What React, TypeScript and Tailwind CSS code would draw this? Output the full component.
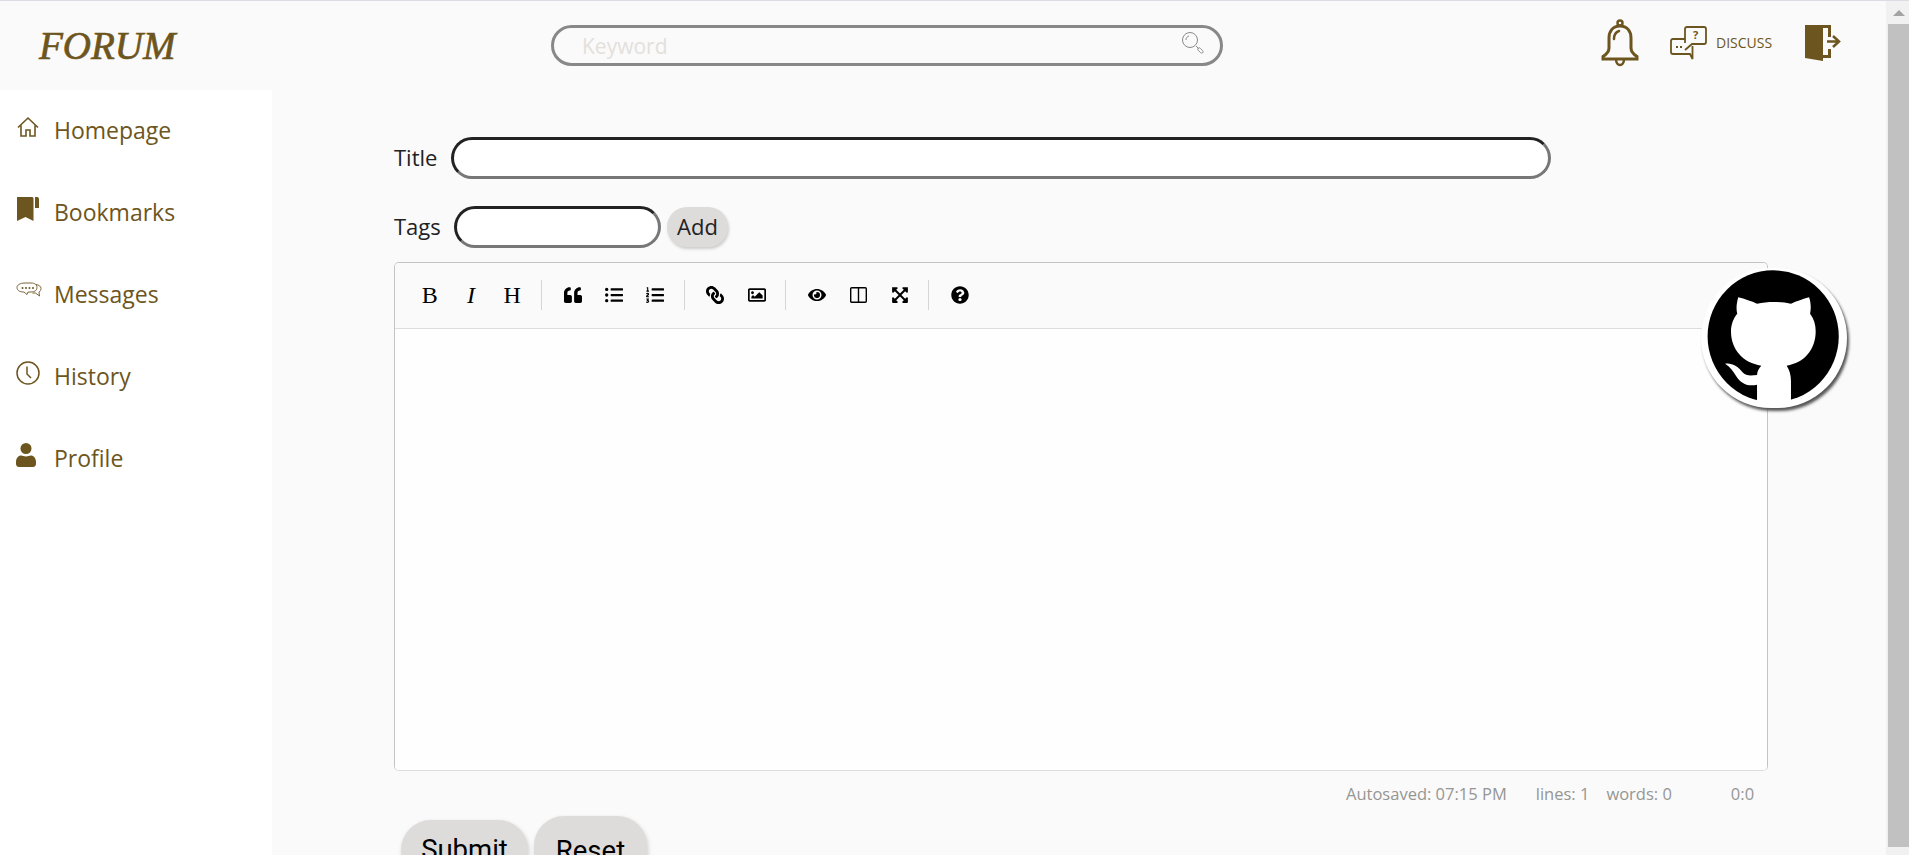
import React from 'react';
import {
  FaQuoteLeft,
  FaListUl,
  FaListOl,
  FaLink,
  FaRegImage,
  FaEye,
  FaExpandArrowsAlt,
  FaQuestionCircle,
} from 'react-icons/fa';

const BROWN = '#6d5520';

function HomeIcon() {
  return (
    <svg width="24" height="24" viewBox="0 0 24 24" fill="none" stroke={BROWN} strokeWidth="1.6">
      <path d="M2 12.500 12 3l10 9.500M5 10.500V21h5v-6h4v6h5V10.500" />
    </svg>
  );
}

function BookmarkIcon() {
  return (
    <svg width="24" height="26" viewBox="0 0 24 26" fill={BROWN}>
      <path d="M1 1h15c1.500 0 1.500 1 1.500 2v22l-8-4-8.500 4V2c0-.5 0-1 0-1Z" />
      <path d="M19 1h2c1.500 0 2 1 2 2v9h-4V1Z" />
    </svg>
  );
}

function MessagesIcon() {
  return (
    <svg width="26" height="18" viewBox="0 0 26 18" fill="none" stroke={BROWN} strokeWidth="0.9">
      <path d="M9 1h6c4 0 6 2 6 4.500S19 10 15 10h-3l-1 2.500-3-2.500C3 10 1 8 1 5.500S4 1 9 1Z" />
      <path d="M20 2.500c3 .5 5 2 5 4 0 1.500-.8 2.800-2 3.500l.5 4-4-3h-3" />
      <g fill={BROWN} stroke="none">
        <circle cx="6.500" cy="6" r="1" />
        <circle cx="10" cy="6" r="1" />
        <circle cx="13.500" cy="6" r="1" />
        <circle cx="17" cy="6" r="1" />
      </g>
    </svg>
  );
}

function ClockIcon() {
  return (
    <svg width="24" height="24" viewBox="0 0 24 24" fill="none" stroke={BROWN} strokeWidth="1.500">
      <circle cx="12" cy="12" r="11" />
      <path d="M11 5.500V13l4 4" />
    </svg>
  );
}

function PersonIcon() {
  return (
    <svg width="20" height="24" viewBox="0 0 20 24" fill={BROWN}>
      <circle cx="10" cy="5.500" r="5.500" />
      <path d="M0 19c0-4 2.500-6.500 5-6.500 1.500 0 3 1 5 1s3.500-1 5-1c2.500 0 5 2.500 5 6.500v2c0 1.500-1 3-3 3H3c-2 0-3-1.500-3-3v-2Z" />
    </svg>
  );
}

function BellIcon() {
  return (
    <svg width="38" height="48" viewBox="0 0 38 48" fill="none" stroke={BROWN} strokeWidth="3">
      <circle cx="19" cy="4" r="2.500" strokeWidth="2.500" />
      <path d="M19 7c-7 0-11 5-11 12v10c0 4-2 6-6 8.500V40h34v-2.500c-4-2.500-6-4.500-6-8.500V19c0-7-4-12-11-12Z" />
      <path d="M13 20c0-4 2-7 5-8" strokeLinecap="round" strokeWidth="2.500" />
      <path d="M15 40c0 4 2 6 4 6s4-2 4-6" strokeWidth="2.500" />
    </svg>
  );
}

function DiscussIcon() {
  return (
    <svg width="37" height="34" viewBox="0 0 37 34" fill="none" stroke={BROWN} strokeWidth="1.800">
      <path d="M15 13H3c-1.500 0-2 1-2 2v11c0 1 .5 2 2 2h17l2.500 5V20" />
      <path d="M15 17V3c0-1 .5-2 2-2h17c1 0 2 1 2 2v13c0 1-1 2-2 2H22l-7 6" />
      <text x="25.500" y="13" fontSize="11" fontWeight="700" textAnchor="middle" fill={BROWN} stroke="none" fontFamily="'Open Sans', sans-serif">?</text>
      <path d="M6 21h2M10 21h2" strokeWidth="2" />
    </svg>
  );
}

function DoorIcon() {
  return (
    <svg width="37" height="36" viewBox="0 0 37 36" fill={BROWN}>
      <path d="M0 0h26v12h-3V3H14v0L0 0ZM0 0l18 3v33L0 33V0ZM23 24h3v9H18v-3h5v-6Z" />
      <path d="M22 16.500h10M28 11l6 5.500-6 5.500" fill="none" stroke={BROWN} strokeWidth="2.500" />
    </svg>
  );
}

function SearchIcon() {
  return (
    <svg width="24" height="24" viewBox="0 0 24 24" fill="none" stroke="#8a8a8a" strokeWidth="1">
      <circle cx="9" cy="9" r="7.500" />
      <path d="M5 9c0-2 1-3.500 3-4" />
      <path d="M15 15l2.500 2.500" />
      <path d="M17 17.500c.5-1 1.500-1 2.500 0l2 2c.8 1 .8 1.800 0 2.300-.8.500-1.500.300-2.300-.5l-2-2c-.5-.7-.5-1.300-.200-1.800Z" />
    </svg>
  );
}

function ColumnsIcon() {
  return (
    <svg width="17" height="16" viewBox="0 0 17 16" fill="none" stroke="#000" strokeWidth="1.400">
      <rect x="0.700" y="0.700" width="15.600" height="14.600" rx="1" />
      <path d="M8.500 1v14" />
    </svg>
  );
}

function GithubBadge() {
  return (
    <a className="absolute left-[1701px] top-[268px] block w-[146px] h-[140px] rounded-full bg-white shadow-[2px_3px_3px_#555]">
      <svg width="146" height="140" viewBox="62 55 443 420" preserveAspectRatio="none">
        <ellipse cx="281" cy="260" rx="199" ry="198" fill="#000" />
        <path
          fill="#fff"
          d="M175 143 C195 148 215 155 232 162 C265 155 300 155 335 162 C352 155 372 148 390 143 C396 160 396 178 393 192 C405 208 410 225 410 245 C410 300 375 340 322 348 C330 360 335 375 335 395 L335 468 L232 468 L232 405 C200 412 180 398 168 378 C160 365 150 350 135 342 C155 338 175 350 188 368 C198 380 215 378 232 376 C232 365 238 355 245 348 C190 340 153 300 153 245 C153 225 160 206 172 192 C168 178 170 160 175 143 Z"
        />
      </svg>
    </a>
  );
}

const navItems = [
  { label: 'Homepage', icon: HomeIcon },
  { label: 'Bookmarks', icon: BookmarkIcon },
  { label: 'Messages', icon: MessagesIcon },
  { label: 'History', icon: ClockIcon },
  { label: 'Profile', icon: PersonIcon },
];

const toolbarIcon = 'w-[41.300px] flex justify-center items-center text-[18px] text-black';
const letterBtn = "w-[41.300px] text-center text-[24px] leading-none text-black font-['Liberation_Serif',serif]";

function Sep() {
  return <span className="block w-px h-[30px] ml-[8px] mr-[10px] bg-[#d5d5d5]" />;
}

export default function App() {
  return (
    <div className="relative flex w-[1909px] h-[855px] overflow-hidden bg-[#fafafa] font-['Open_Sans',sans-serif]">
      <div className="flex-1 flex flex-col border-t border-[#dcdce2]">
        {/* Top bar */}
        <header className="flex items-center h-[89px] shrink-0">
          <div className="w-[551px] pl-[39px] text-[39px] leading-none italic text-[#6d5520] font-['Liberation_Serif',serif] [-webkit-text-stroke:0.7px_#6d5520]">
            FORUM
          </div>
          <div className="flex items-center w-[672px] h-[41px] pl-[28px] pr-[15px] rounded-full border-[3px] border-[#888]">
            <span className="flex-1 text-[21px] leading-[36px] pt-[1px] text-[#e3e0dc]">Keyword</span>
            <span className="-mt-[6px]">
              <SearchIcon />
            </span>
          </div>
          <div className="ml-[378px] -mt-[6px]">
            <BellIcon />
          </div>
          <div className="ml-[31px] -mt-[6px]">
            <DiscussIcon />
          </div>
          <span className="ml-[9px] -mt-[6px] text-[14px] text-[#6d5520]">DISCUSS</span>
          <div className="ml-[33px] -mt-[5px]">
            <DoorIcon />
          </div>
        </header>

        <div className="flex flex-1 min-h-0">
          {/* Sidebar */}
          <aside className="w-[272px] shrink-0 bg-white">
            {navItems.map((item) => (
              <div key={item.label} className="flex items-center h-[82px] pb-[2px]">
                <div className="w-[54px] pl-[16px] pb-[6px] flex">
                  <item.icon />
                </div>
                <span className="text-[23px] text-[#6d5520]">{item.label}</span>
              </div>
            ))}
          </aside>

          {/* Form */}
          <main className="pl-[122px] pt-[47px]">
            <div className="flex items-center h-[42px]">
              <label className="w-[57px] pb-[2px] text-[22px] text-[#222]">Title</label>
              <input className="w-[1100px] h-[42px] rounded-full bg-white border-[3px] border-t-[#222] border-l-[#222] border-b-[#777] border-r-[#777]" />
            </div>
            <div className="flex items-center h-[42px] mt-[27px]">
              <label className="w-[60px] pb-[2px] text-[22px] text-[#222]">Tags</label>
              <input className="w-[207px] h-[42px] rounded-full bg-white border-[3px] border-t-[#222] border-l-[#222] border-b-[#777] border-r-[#777]" />
              <button className="ml-[6px] w-[61px] h-[40px] pb-[2px] rounded-full bg-[#dedbdb] text-[22px] text-[#222] shadow-[1px_2px_3px_#ccc]">
                Add
              </button>
            </div>

            <div className="mt-[14px] w-[1374px] h-[509px] flex flex-col rounded-[5px] border border-[#c4c4c4] border-b-[#ddd] overflow-hidden">
              <div className="flex items-center h-[66px] shrink-0 pl-[14px] pb-[2px] border-b border-[#ddd] bg-[#fafafa]">
                <span className={letterBtn}>B</span>
                <span className={letterBtn + ' italic'}>I</span>
                <span className={letterBtn}>H</span>
                <Sep />
                <span className={toolbarIcon}><FaQuoteLeft /></span>
                <span className={toolbarIcon}><FaListUl /></span>
                <span className={toolbarIcon}><FaListOl /></span>
                <Sep />
                <span className={toolbarIcon}><FaLink className="-scale-x-100" /></span>
                <span className={toolbarIcon}><FaRegImage /></span>
                <Sep />
                <span className={toolbarIcon}><FaEye /></span>
                <span className={toolbarIcon}><ColumnsIcon /></span>
                <span className={toolbarIcon}><FaExpandArrowsAlt /></span>
                <Sep />
                <span className={toolbarIcon}><FaQuestionCircle /></span>
              </div>
              <div className="flex-1 bg-[#fefefe]" />
            </div>

            <div className="flex w-[1374px] h-[22px] mt-[12px] text-[16.500px] leading-[22px] text-[#959694]">
              <span className="ml-[952px]">Autosaved: 07:15 PM</span>
              <span className="ml-[29px]">lines: 1</span>
              <span className="ml-[17px]">words: 0</span>
              <span className="ml-[59px]">0:0</span>
            </div>

            <div className="flex items-start ml-[7px] mt-[11px] text-[27.500px] leading-none text-black font-['Roboto',sans-serif]">
              <button className="w-[127px] h-[60px] mt-[4px] rounded-[30px] bg-[#dedbdb] shadow-[1px_2px_4px_#ccc]">
                Submit
              </button>
              <button className="ml-[6px] w-[113px] h-[70px] rounded-[30px] bg-[#dedbdb] shadow-[1px_2px_4px_#ccc]">
                Reset
              </button>
            </div>
          </main>
        </div>
      </div>

      {/* Page scrollbar */}
      <div className="w-[23px] shrink-0 flex flex-col bg-[#f1f1f1] border-t border-[#dcdce2]">
        <div className="h-[23px] flex items-center justify-center pl-[2px]">
          <span className="block w-0 h-0 border-x-[6px] border-x-transparent border-b-[6px] border-b-[#a3a3a3]" />
        </div>
        <div className="h-[823px] ml-[2px] bg-[#c1c1c1]" />
      </div>

      <GithubBadge />
    </div>
  );
}
